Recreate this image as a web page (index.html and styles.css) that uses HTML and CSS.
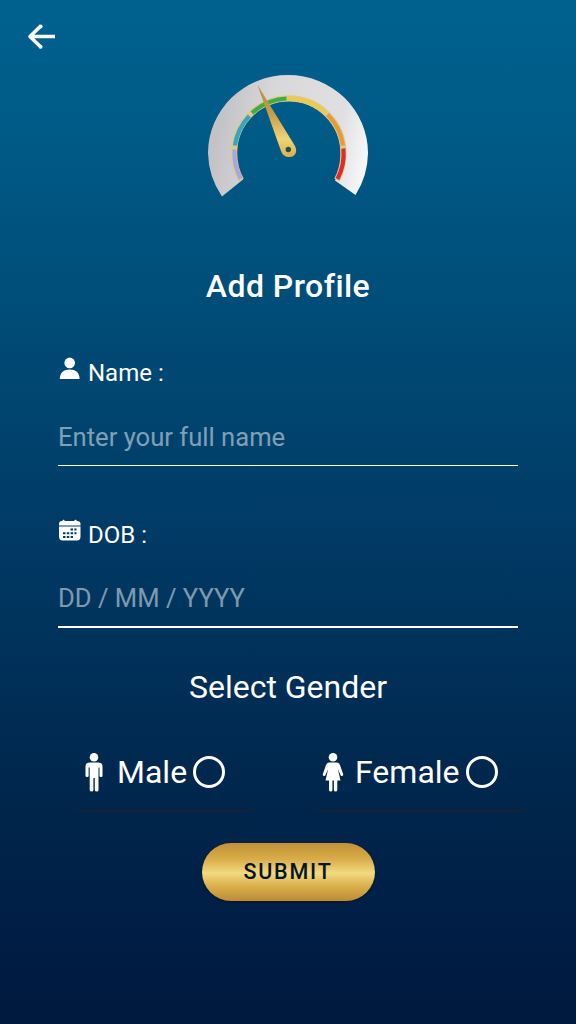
FILE: index.html
```
<!DOCTYPE html>
<html lang="en">
<head>
    <meta charset="UTF-8">
    <title>Add Profile</title>
    <link rel="stylesheet" href="styles.css">
</head>
<body>
    <header class="topbar">
        <a class="back" href="#" aria-label="Back">
            <svg width="30" height="28" viewBox="0 0 30 28">
                <path d="M29 14.500H4M15 3.800L4 14.500L15 25.200" fill="none" stroke="#fff" stroke-width="3.600" stroke-linejoin="round"/>
                <circle cx="14.700" cy="4.400" r="1.900" fill="#fff"/>
                <circle cx="14.700" cy="24.800" r="1.900" fill="#fff"/>
            </svg>
        </a>
    </header>
    <main>
        <svg class="gauge" width="160" height="122" viewBox="0 0 160 122">
            <defs>
                <linearGradient id="silver" x1="0" y1="0.85" x2="1" y2="1">
                    <stop offset="0" stop-color="#c3c2c6"/>
                    <stop offset="0.3" stop-color="#d8d8da"/>
                    <stop offset="0.75" stop-color="#e0e0e2"/>
                    <stop offset="0.95" stop-color="#f8f8fa"/>
                </linearGradient>
                <linearGradient id="needle" x1="0" y1="0" x2="0" y2="1">
                    <stop offset="0" stop-color="#b58a3c"/>
                    <stop offset="0.4" stop-color="#c89c48"/>
                    <stop offset="0.75" stop-color="#f0d478"/>
                    <stop offset="1" stop-color="#dcb04e"/>
                </linearGradient>
            </defs>
            <path d="M14 121.500A80 80 0 0 1 0 78A80 78 0 0 1 160 78A80 80 0 0 1 147.500 120L127 105.500A52 52 0 0 0 132.700 78A52 52 0 0 0 28.700 78A52 52 0 0 0 35 104.500Z" fill="url(#silver)"/>
            <g fill="none">
                <path d="M33 105A54.600 54.600 0 0 1 26.200 78A54.600 54.600 0 0 1 135.400 78A54.600 54.600 0 0 1 129 105" stroke="#dfc888" stroke-width="6.200"/>
                <g stroke-width="4.200">
                    <path d="M32.800 103.800A54.600 54.600 0 0 1 26.500 74.500" stroke="#aaa5e0"/>
                    <path d="M26.900 70.500A54.600 54.600 0 0 1 41.300 41" stroke="#36a5c2"/>
                    <path d="M44 38A54.600 54.600 0 0 1 78.500 23.500" stroke="#3fae48"/>
                    <path d="M79.500 23.500A54.600 54.600 0 0 1 117.500 37.500" stroke="#eccb4c"/>
                    <path d="M119.500 39.500A54.600 54.600 0 0 1 135 70.500" stroke="#e79a36"/>
                    <path d="M135.400 73.500A54.600 54.600 0 0 1 129.500 104" stroke="#dc2c2c"/>
                </g>
            </g>
            <path d="M49.500 10L87 71C90 77 87 82 81.500 82C77 82 74.500 80 73 76Z" fill="url(#needle)"/>
            <circle cx="80.300" cy="74.500" r="2.700" fill="#17534f"/>
        </svg>
        <h1>Add Profile</h1>
        <form class="profileForm">
            <div class="field">
                <label for="name">
                    <svg class="fieldIcon" width="24" height="24" viewBox="0 0 24 24" fill="#fff">
                        <circle cx="11.700" cy="6.900" r="5.300"/>
                        <path d="M1.800 23C1.800 16 6 13.400 11.700 13.400S21.600 16 21.600 23Z"/>
                    </svg>
                    <span>Name :</span>
                </label>
                <input type="text" id="name" placeholder="Enter your full name">
            </div>
            <div class="field dob">
                <label for="dob">
                    <svg class="fieldIcon" width="24" height="24" viewBox="0 -1 24 24">
                        <path d="M1 6.500V5Q1 2 4 2L5.500 .500L7 2H16L17.500 .500L19 2Q22.500 2 22.500 5V6.500ZM1 7.500H22.500V17.500Q22.500 21.500 19 21.500H4.500Q1 21.500 1 17.500Z" fill="#fff"/>
                        <path d="M12.500 10.500H18.500M5 14.300H18.500M5 18.100H15" stroke="#003c66" stroke-width="2" stroke-dasharray="2.500 1.300"/>
                    </svg>
                    <span>DOB :</span>
                </label>
                <input type="text" id="dob" placeholder="DD / MM / YYYY">
            </div>
            <h2>Select Gender</h2>
            <div class="genders">
                <label class="gender male">
                    <svg width="18" height="40" viewBox="0 -1 18 40" fill="#fff">
                        <circle cx="9" cy="4.200" r="4.300"/>
                        <path d="M4.500 9.500H13.500Q17.500 9.500 17.500 13.500V23Q17.500 24 16 24T14.500 23V14.500H13.500V37Q13.500 38.500 11.700 38.500T9.800 37V25H8.400V37Q8.400 38.500 6.600 38.500T4.700 37V14.500H3.600V23Q3.600 24 2.100 24T.500 23V13.500Q.500 9.500 4.500 9.500Z"/>
                    </svg>
                    <span>Male</span>
                    <input type="radio" name="gender" value="male">
                </label>
                <label class="gender female">
                    <svg width="22" height="40" viewBox="0 -1 22 40" fill="#fff">
                        <circle cx="11" cy="4.200" r="4.300"/>
                        <path d="M7 9.500H15Q17.200 9.500 18 12L21.300 21.500Q21 23.500 19 22.900L15.800 16L18.500 27.500H15.300V37Q15.300 38.500 13.600 38.500T11.900 37V27.500H10.400V37Q10.400 38.500 8.700 38.500T7 37V27.500H3.500L6.200 16L3 22.900Q1 23.500 .700 21.500L4 12Q4.800 9.500 7 9.500Z"/>
                    </svg>
                    <span>Female</span>
                    <input type="radio" name="gender" value="female">
                </label>
            </div>
            <button type="submit">SUBMIT</button>
        </form>
    </main>
</body>
</html>
```
FILE: styles.css
```
* {
    box-sizing: border-box;
}
body {
    margin: 0;
    height: 1024px;
    overflow: hidden;
    background: linear-gradient(#00618f 0%, #005b87 12%, #004f7b 27%, #003e69 48%, #00284f 75%, #00183e 100%);
    color: white;
    font-family: Roboto, sans-serif;
}
.topbar {
    height: 75px;
    padding: 22px 0 0 26px;
}
.back svg {
    display: block;
}
main {
    display: flex;
    flex-direction: column;
    align-items: center;
}
.gauge {
    display: block;
}
h1 {
    margin: 69px 0 0;
    font-size: 32px;
    line-height: 40px;
    font-weight: 500;
    letter-spacing: 0.45px;
}
.profileForm {
    display: flex;
    flex-direction: column;
    align-items: center;
    width: 460px;
    margin-top: 50px;
}
.field {
    width: 100%;
    height: 111px;
}
.field label {
    display: flex;
    height: 34px;
    font-size: 24px;
    line-height: 34px;
}
.fieldIcon {
    margin-right: 6px;
}
.field input {
    display: block;
    width: 100%;
    height: 50px;
    margin-top: 26px;
    padding: 0 0 8px;
    border: none;
    border-bottom: 1px solid white;
    background: transparent;
    color: white;
    font: 25.6px Roboto, sans-serif;
    outline: none;
}
.field input::placeholder {
    color: rgba(255, 255, 255, 0.5);
}
.dob {
    margin-top: 51px;
}
.dob input {
    border-bottom-width: 2px;
}
h2 {
    margin: 38px 0 0;
    font-size: 32px;
    line-height: 40px;
    font-weight: 400;
}
.genders {
    display: flex;
    gap: 56px;
    margin: 46px 0 0 26px;
}
.gender {
    display: flex;
    align-items: center;
    height: 60px;
    padding-bottom: 20px;
    font-size: 32px;
    white-space: nowrap;
    background: linear-gradient(90deg, transparent, #11243b 6%, #11243b 94%, transparent) bottom 1px left 0 / 100% 3px no-repeat;
}
.male {
    width: 183px;
    padding-left: 13px;
}
.female {
    width: 219px;
    padding-left: 11px;
}
.gender {
    padding-bottom: 23px;
}
.gender span {
    margin: 0 6px 0 14px;
}
.female span {
    margin-left: 11px;
}
.gender input {
    appearance: none;
    width: 32px;
    height: 32px;
    margin: 0;
    border: 3px solid white;
    border-radius: 50%;
}
.gender input:checked {
    background: radial-gradient(white 45%, transparent 50%);
}
button {
    width: 173px;
    height: 58px;
    margin-top: 30px;
    padding: 0 0 2px;
    border: none;
    border-radius: 29px;
    background: linear-gradient(#c29137, #d9ad49 28%, #f2da80 52%, #dab04b 74%, #bd8c35);
    box-shadow: 0 1px 3px rgba(0, 0, 0, 0.4);
    color: #06152a;
    font: 500 21.5px Roboto, sans-serif;
    letter-spacing: 1.8px;
}
```
